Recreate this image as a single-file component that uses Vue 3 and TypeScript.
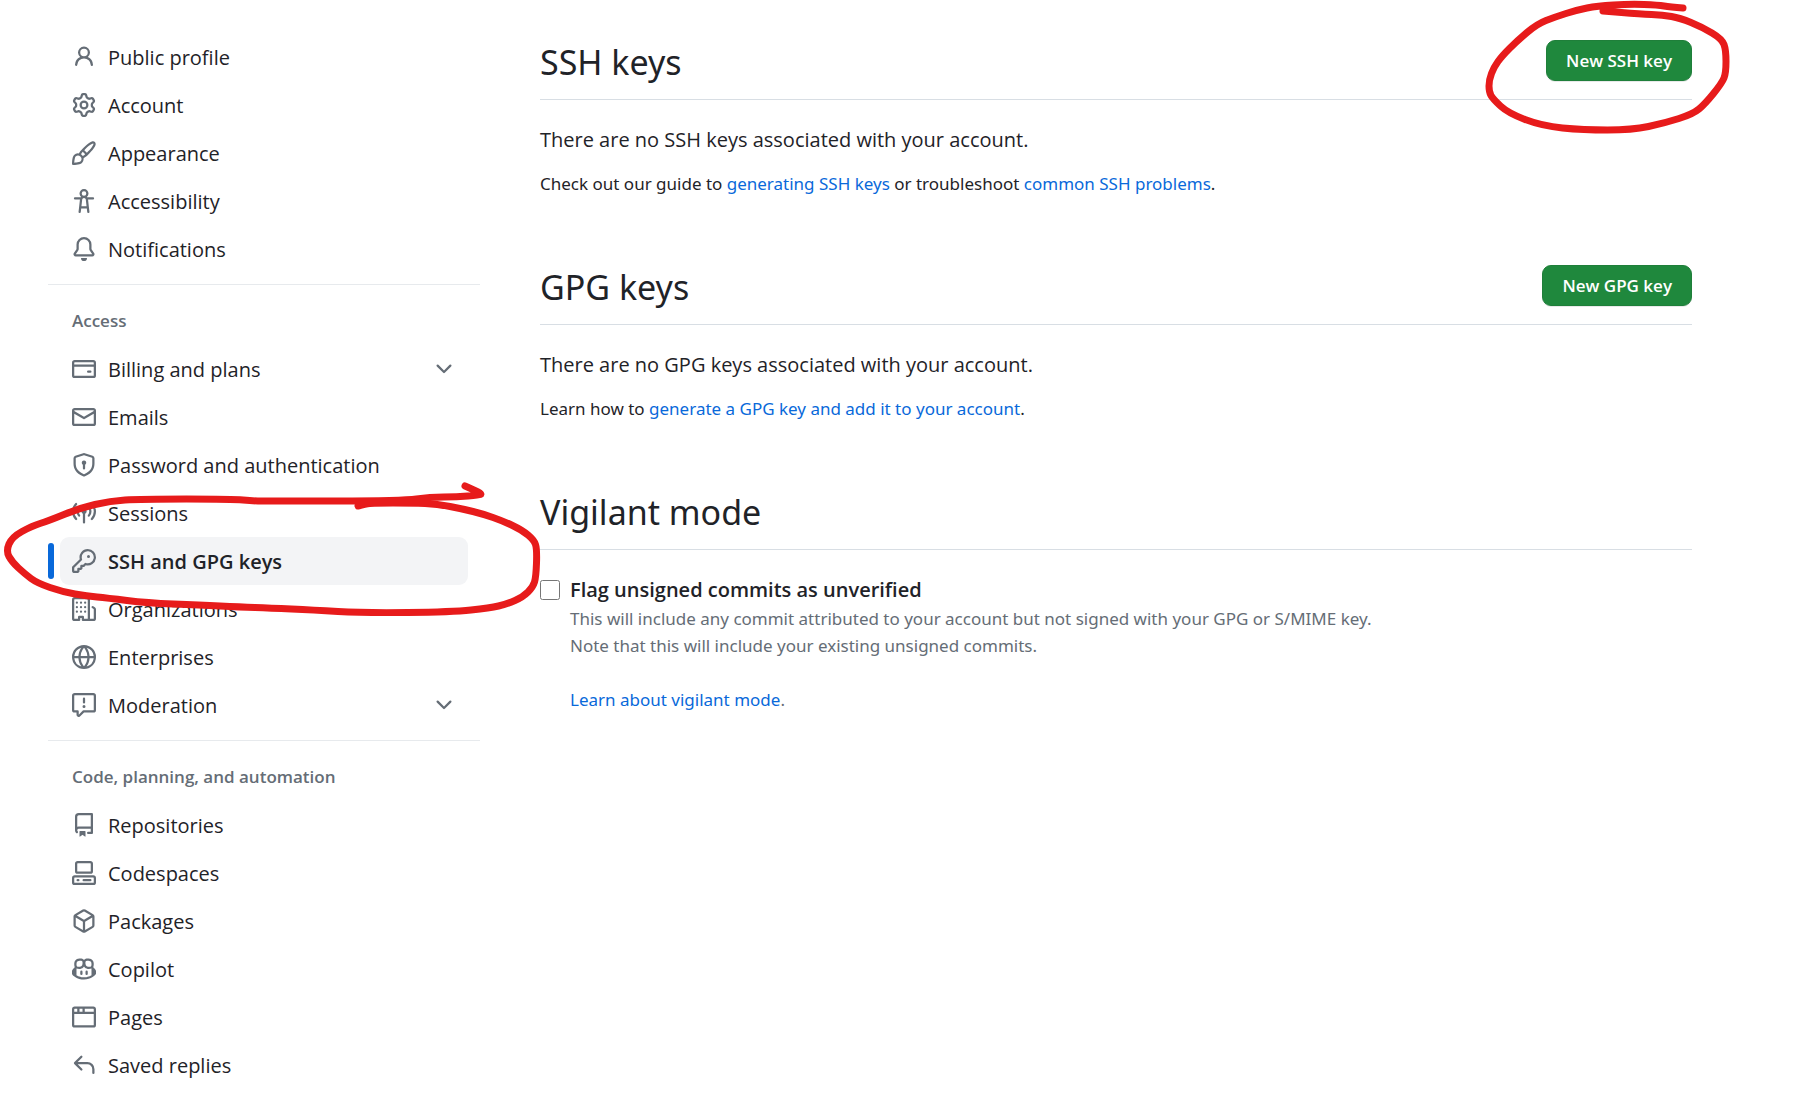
<script setup lang="ts">
import { ref } from 'vue'

interface NavItem {
  label: string
  icon: string
  expandable?: boolean
  current?: boolean
}

interface NavGroup {
  title?: string
  items: NavItem[]
}

type Point = [number, number]

const icons: Record<string, string> = {
  person: 'M10.561 8.073a6.005 6.005 0 0 1 3.432 5.142.75.75 0 1 1-1.498.07 4.5 4.5 0 0 0-8.99 0 .75.75 0 0 1-1.498-.07 6.004 6.004 0 0 1 3.431-5.142 3.999 3.999 0 1 1 5.123 0ZM10.5 5a2.5 2.5 0 1 0-5 0 2.5 2.5 0 0 0 5 0Z',
  gear: 'M8 0a8.2 8.2 0 0 1 .701.031C9.444.095 9.99.645 10.16 1.29l.288 1.107c.018.066.079.158.212.224.231.114.454.243.668.386.123.082.233.09.299.071l1.103-.303c.644-.176 1.392.021 1.82.63.27.385.506.792.704 1.218.315.675.111 1.422-.364 1.891l-.814.806c-.049.048-.098.147-.088.294.016.257.016.515 0 .772-.01.147.038.246.088.294l.814.806c.475.469.679 1.216.364 1.891a7.977 7.977 0 0 1-.704 1.217c-.428.61-1.176.807-1.82.63l-1.102-.302c-.067-.019-.177-.011-.3.071a5.909 5.909 0 0 1-.668.386c-.133.066-.194.158-.211.224l-.29 1.106c-.168.646-.715 1.196-1.458 1.26a8.006 8.006 0 0 1-1.402 0c-.743-.064-1.289-.614-1.458-1.26l-.289-1.106c-.018-.066-.079-.158-.212-.224a5.738 5.738 0 0 1-.668-.386c-.123-.082-.233-.09-.299-.071l-1.103.303c-.644.176-1.392-.021-1.82-.63a8.12 8.12 0 0 1-.704-1.218c-.315-.675-.111-1.422.363-1.891l.815-.806c.05-.048.098-.147.088-.294a6.214 6.214 0 0 1 0-.772c.01-.147-.038-.246-.088-.294l-.815-.806C.635 6.045.431 5.298.746 4.623a7.92 7.92 0 0 1 .704-1.217c.428-.61 1.176-.807 1.82-.63l1.102.302c.067.019.177.011.3-.071.214-.143.437-.272.668-.386.133-.066.194-.158.211-.224l.29-1.106C6.009.645 6.556.095 7.299.03 7.53.01 7.764 0 8 0Zm-.571 1.525c-.036.003-.108.036-.137.146l-.289 1.105c-.147.561-.549.967-.998 1.189-.173.086-.34.183-.5.29-.417.278-.97.423-1.529.27l-1.103-.303c-.109-.03-.175.016-.195.045-.22.312-.412.644-.573.99-.014.031-.021.11.059.19l.815.806c.411.406.562.957.53 1.456a4.709 4.709 0 0 0 0 .582c.032.499-.119 1.05-.53 1.456l-.815.806c-.081.08-.073.159-.059.19.162.346.353.677.573.989.02.03.085.076.195.046l1.102-.303c.56-.153 1.113-.008 1.53.27.161.107.328.204.501.29.447.222.85.629.997 1.189l.289 1.105c.029.109.101.143.137.146a6.6 6.6 0 0 0 1.142 0c.036-.003.108-.036.137-.146l.289-1.105c.147-.561.549-.967.998-1.189.173-.086.34-.183.5-.29.417-.278.97-.423 1.529-.27l1.103.303c.109.029.175-.016.195-.045.22-.313.411-.644.573-.99.014-.031.021-.11-.059-.19l-.815-.806c-.411-.406-.562-.957-.53-1.456a4.709 4.709 0 0 0 0-.582c-.032-.499.119-1.05.53-1.456l.815-.806c.081-.08.073-.159.059-.19a6.464 6.464 0 0 0-.573-.989c-.02-.03-.085-.076-.195-.046l-1.102.303c-.56.153-1.113.008-1.53-.27a4.44 4.44 0 0 0-.501-.29c-.447-.222-.85-.629-.997-1.189l-.289-1.105c-.029-.11-.101-.143-.137-.146a6.6 6.6 0 0 0-1.142 0ZM11 8a3 3 0 1 1-6 0 3 3 0 0 1 6 0ZM9.5 8a1.5 1.5 0 1 0-3.001.001A1.5 1.5 0 0 0 9.5 8Z',
  paintbrush: 'M11.134 1.535c.7-.509 1.416-.942 2.076-1.155.649-.21 1.463-.267 2.069.34.603.601.568 1.411.368 2.07-.202.668-.624 1.39-1.125 2.096-1.011 1.424-2.496 2.987-3.775 4.249-1.098 1.084-2.132 1.839-3.04 2.3a3.744 3.744 0 0 1-1.055 3.217c-.431.431-1.065.691-1.657.861-.614.177-1.294.287-1.914.357A21.151 21.151 0 0 1 .797 16H.743l.007-.75H.749L.742 16a.75.75 0 0 1-.743-.742l.743-.008-.742.007v-.054a21.25 21.25 0 0 1 .13-2.284c.067-.647.187-1.287.358-1.914.17-.591.43-1.226.86-1.657a3.746 3.746 0 0 1 3.227-1.054c.466-.893 1.225-1.907 2.314-2.982 1.271-1.255 2.833-2.75 4.245-3.777ZM1.62 13.089c-.051.464-.086.929-.104 1.395.466-.018.932-.053 1.396-.104a10.511 10.511 0 0 0 1.668-.309c.526-.151.856-.325 1.011-.48a2.25 2.25 0 1 0-3.182-3.182c-.155.155-.329.485-.48 1.01a10.515 10.515 0 0 0-.309 1.67Zm10.396-10.34c-1.224.89-2.605 2.189-3.822 3.384l1.718 1.718c1.21-1.205 2.51-2.597 3.387-3.833.47-.662.78-1.227.912-1.662.134-.444.032-.551.009-.575h-.001V1.78c-.014-.014-.113-.113-.548.027-.432.14-.995.462-1.655.942Zm-4.832 7.266-.001.001a9.859 9.859 0 0 0 1.63-1.142L7.155 7.216a9.7 9.7 0 0 0-1.161 1.607c.482.302.889.71 1.19 1.192Z',
  accessibility: 'M9.923 5.302c.063.063.122.129.178.198H14A.75.75 0 0 1 14 7h-3.3l.578 5.163.362 2.997a.75.75 0 0 1-1.49.18L9.868 13H6.132l-.282 2.34a.75.75 0 0 1-1.49-.18l.362-2.997L5.3 7H2a.75.75 0 0 1 0-1.5h3.9a2.54 2.54 0 0 1 .176-.198 3 3 0 1 1 3.847 0ZM9.2 7.073h-.001a1.206 1.206 0 0 0-2.398 0L6.305 11.5h3.39ZM9.5 3a1.5 1.5 0 1 0-3.001.001A1.5 1.5 0 0 0 9.5 3Z',
  bell: 'M8 16a2 2 0 0 0 1.985-1.75c.017-.137-.097-.25-.235-.25h-3.5c-.138 0-.252.113-.235.25A2 2 0 0 0 8 16ZM3 5a5 5 0 0 1 10 0v2.947c0 .05.015.098.042.139l1.703 2.555A1.519 1.519 0 0 1 13.482 13H2.518a1.516 1.516 0 0 1-1.263-2.36l1.703-2.554A.255.255 0 0 0 3 7.947Zm5-3.5A3.5 3.5 0 0 0 4.5 5v2.947c0 .346-.102.683-.294.97l-1.703 2.556a.017.017 0 0 0-.003.01l.001.006c0 .002.002.004.004.006l.006.004.007.001h10.964l.007-.001.006-.004.004-.006.001-.007a.017.017 0 0 0-.003-.01l-1.703-2.554a1.745 1.745 0 0 1-.294-.97V5A3.5 3.5 0 0 0 8 1.5Z',
  card: 'M10.75 9a.75.75 0 0 0 0 1.5h1.5a.75.75 0 0 0 0-1.5h-1.5ZM0 3.75C0 2.784.784 2 1.75 2h12.5c.966 0 1.75.784 1.75 1.75v8.5A1.75 1.75 0 0 1 14.25 14H1.75A1.75 1.75 0 0 1 0 12.25ZM14.5 6.5h-13v5.75c0 .138.112.25.25.25h12.5a.25.25 0 0 0 .25-.25Zm0-2.75a.25.25 0 0 0-.25-.25H1.75a.25.25 0 0 0-.25.25V5h13Z',
  mail: 'M1.75 2h12.5c.966 0 1.75.784 1.75 1.75v8.5A1.75 1.75 0 0 1 14.25 14H1.75A1.75 1.75 0 0 1 0 12.25v-8.5C0 2.784.784 2 1.75 2ZM1.5 12.251c0 .138.112.25.25.25h12.5a.25.25 0 0 0 .25-.25V5.809L8.38 9.397a.75.75 0 0 1-.76 0L1.5 5.809v6.442Zm13-8.181v-.32a.25.25 0 0 0-.25-.25H1.75a.25.25 0 0 0-.25.25v.32L8 7.88Z',
  shield: 'm8.533.133 5.25 1.68A1.75 1.75 0 0 1 15 3.48V7c0 1.566-.32 3.182-1.303 4.682-.983 1.498-2.585 2.813-5.032 3.855a1.697 1.697 0 0 1-1.33 0c-2.447-1.042-4.049-2.357-5.032-3.855C1.32 10.182 1 8.566 1 7V3.48a1.755 1.755 0 0 1 1.217-1.667l5.25-1.68a1.748 1.748 0 0 1 1.066 0Zm-.61 1.429.001.001-5.25 1.68a.251.251 0 0 0-.174.237V7c0 1.36.275 2.666 1.057 3.859.784 1.194 2.121 2.342 4.366 3.298a.196.196 0 0 0 .154 0c2.245-.957 3.582-2.103 4.366-3.297C13.225 9.666 13.5 8.358 13.5 7V3.48a.25.25 0 0 0-.174-.238l-5.25-1.68a.25.25 0 0 0-.153 0ZM9.5 6.5c0 .536-.286 1.032-.75 1.3v2.45a.75.75 0 0 1-1.5 0V7.8A1.5 1.5 0 1 1 9.5 6.5Z',
  broadcast: 'M8.75 8.582v5.668a.75.75 0 0 1-1.5 0V8.582a1.75 1.75 0 1 1 1.5 0Zm3.983-7.125a.75.75 0 0 1 1.06.026A7.976 7.976 0 0 1 16 7c0 2.139-.84 4.083-2.207 5.517a.75.75 0 1 1-1.086-1.034A6.474 6.474 0 0 0 14.5 7a6.474 6.474 0 0 0-1.793-4.483.75.75 0 0 1 .026-1.06Zm-9.466 0c.3.286.312.76.026 1.06A6.474 6.474 0 0 0 1.5 7a6.47 6.47 0 0 0 1.793 4.483.75.75 0 0 1-1.086 1.034A7.973 7.973 0 0 1 0 7c0-2.139.84-4.083 2.207-5.517a.75.75 0 0 1 1.06-.026Zm8.556 2.321A4.988 4.988 0 0 1 13 7a4.988 4.988 0 0 1-1.177 3.222.75.75 0 1 1-1.146-.967A3.487 3.487 0 0 0 11.5 7c0-.86-.309-1.645-.823-2.255a.75.75 0 0 1 1.146-.967Zm-6.492.958A3.48 3.48 0 0 0 4.5 7a3.48 3.48 0 0 0 .823 2.255.75.75 0 0 1-1.146.967A4.981 4.981 0 0 1 3 7a4.982 4.982 0 0 1 1.188-3.236.75.75 0 1 1 1.143.972Z',
  key: 'M10.5 0a5.499 5.499 0 1 1-1.288 10.848l-.932.932a.749.749 0 0 1-.53.22H7v.75a.749.749 0 0 1-.22.53l-.5.5a.749.749 0 0 1-.53.22H5v.75a.749.749 0 0 1-.22.53l-.5.5a.749.749 0 0 1-.53.22h-2A1.75 1.75 0 0 1 0 14.25v-2c0-.199.079-.389.22-.53l4.932-4.932A5.5 5.5 0 0 1 10.5 0Zm-4 5.5c-.001.431.069.86.205 1.269a.75.75 0 0 1-.181.768L1.5 12.56v1.69c0 .138.112.25.25.25h1.69l.06-.06v-1.19a.75.75 0 0 1 .75-.75h1.19l.06-.06v-1.19a.75.75 0 0 1 .75-.75h1.19l1.023-1.025a.75.75 0 0 1 .768-.18A4 4 0 1 0 6.5 5.5ZM11 6a1 1 0 1 1 0-2 1 1 0 0 1 0 2Z',
  organization: 'M1.75 16A1.75 1.75 0 0 1 0 14.25V1.75C0 .784.784 0 1.75 0h8.5C11.216 0 12 .784 12 1.75v12.5c0 .085-.006.168-.018.25h2.268a.25.25 0 0 0 .25-.25V8.285a.25.25 0 0 0-.111-.208l-1.055-.703a.749.749 0 1 1 .832-1.248l1.055.703c.487.325.779.871.779 1.456v5.965A1.75 1.75 0 0 1 14.25 16h-3.5a.766.766 0 0 1-.197-.026c-.099.017-.2.026-.303.026h-3a.75.75 0 0 1-.75-.75V14h-1v1.25a.75.75 0 0 1-.75.75Zm-.25-1.75c0 .138.112.25.25.25H4v-1.25a.75.75 0 0 1 .75-.75h2.5a.75.75 0 0 1 .75.75v1.25h2.25a.25.25 0 0 0 .25-.25V1.75a.25.25 0 0 0-.25-.25h-8.5a.25.25 0 0 0-.25.25ZM2.5 3.75a.75.75 0 1 1 1.5 0 .75.75 0 0 1-1.5 0Zm2.75 0a.75.75 0 1 1 1.5 0 .75.75 0 0 1-1.5 0Zm2.75 0a.75.75 0 1 1 1.5 0 .75.75 0 0 1-1.5 0ZM2.5 6.75a.75.75 0 1 1 1.5 0 .75.75 0 0 1-1.5 0Zm2.75 0a.75.75 0 1 1 1.5 0 .75.75 0 0 1-1.5 0Zm2.75 0a.75.75 0 1 1 1.5 0 .75.75 0 0 1-1.5 0ZM2.5 9.75a.75.75 0 1 1 1.5 0 .75.75 0 0 1-1.5 0Zm2.75 0a.75.75 0 1 1 1.5 0 .75.75 0 0 1-1.5 0Zm2.75 0a.75.75 0 1 1 1.5 0 .75.75 0 0 1-1.5 0Z',
  globe: 'M8 0a8 8 0 1 1 0 16A8 8 0 0 1 8 0ZM5.78 8.75a9.64 9.64 0 0 0 1.363 4.177c.255.426.542.832.857 1.215.245-.296.551-.705.857-1.215A9.64 9.64 0 0 0 10.22 8.75Zm4.44-1.5a9.64 9.64 0 0 0-1.363-4.177c-.307-.51-.612-.919-.857-1.215a9.927 9.927 0 0 0-.857 1.215A9.64 9.64 0 0 0 5.78 7.25Zm-5.944 1.5H1.543a6.507 6.507 0 0 0 4.666 5.5c-.123-.181-.24-.365-.352-.552-.715-1.192-1.437-2.874-1.581-4.948Zm-2.733-1.5h2.733c.144-2.074.866-3.756 1.58-4.948.12-.197.237-.381.353-.552a6.507 6.507 0 0 0-4.666 5.5Zm10.181 1.5c-.144 2.074-.866 3.756-1.58 4.948-.12.197-.237.381-.353.552a6.507 6.507 0 0 0 4.666-5.5Zm2.733-1.5a6.507 6.507 0 0 0-4.666-5.5c.123.181.24.365.353.552.714 1.192 1.436 2.874 1.58 4.948Z',
  report: 'M0 1.75C0 .784.784 0 1.75 0h12.5C15.216 0 16 .784 16 1.75v9.5A1.75 1.75 0 0 1 14.25 13H8.06l-2.573 2.573A1.458 1.458 0 0 1 3 14.543V13H1.75A1.75 1.75 0 0 1 0 11.25Zm1.75-.25a.25.25 0 0 0-.25.25v9.5c0 .138.112.25.25.25h2a.75.75 0 0 1 .75.75v2.19l2.72-2.72a.749.749 0 0 1 .53-.22h6.5a.25.25 0 0 0 .25-.25v-9.5a.25.25 0 0 0-.25-.25Zm7 2.25v2.5a.75.75 0 0 1-1.5 0v-2.5a.75.75 0 0 1 1.5 0ZM9 9a1 1 0 1 1-2 0 1 1 0 0 1 2 0Z',
  repo: 'M2 2.5A2.5 2.5 0 0 1 4.5 0h8.75a.75.75 0 0 1 .75.75v12.5a.75.75 0 0 1-.75.75h-2.5a.75.75 0 0 1 0-1.5h1.75v-2h-8a1 1 0 0 0-.714 1.7.75.75 0 1 1-1.072 1.05A2.495 2.495 0 0 1 2 11.5Zm10.5-1h-8a1 1 0 0 0-1 1v6.708A2.486 2.486 0 0 1 4.5 9h8ZM5 12.25a.25.25 0 0 1 .25-.25h3.5a.25.25 0 0 1 .25.25v3.25a.25.25 0 0 1-.4.2l-1.45-1.087a.249.249 0 0 0-.3 0L5.4 15.7a.25.25 0 0 1-.4-.2Z',
  codespaces: 'M0 11.25c0-.966.784-1.75 1.75-1.75h12.5c.966 0 1.75.784 1.75 1.75v3A1.75 1.75 0 0 1 14.25 16H1.75A1.75 1.75 0 0 1 0 14.25Zm2-9.5C2 .784 2.784 0 3.75 0h8.5C13.216 0 14 .784 14 1.75v5a1.75 1.75 0 0 1-1.75 1.75h-8.5A1.75 1.75 0 0 1 2 6.75Zm1.75-.25a.25.25 0 0 0-.25.25v5c0 .138.112.25.25.25h8.5a.25.25 0 0 0 .25-.25v-5a.25.25 0 0 0-.25-.25Zm-2 9.5a.25.25 0 0 0-.25.25v3c0 .138.112.25.25.25h12.5a.25.25 0 0 0 .25-.25v-3a.25.25 0 0 0-.25-.25ZM7 12.75a.75.75 0 0 1 .75-.75h4.5a.75.75 0 0 1 0 1.5h-4.5a.75.75 0 0 1-.75-.75Zm-4 0a.75.75 0 0 1 .75-.75h.5a.75.75 0 0 1 0 1.5h-.5a.75.75 0 0 1-.75-.75Z',
  package: 'm8.878.392 5.25 3.045c.54.314.872.89.872 1.514v6.098a1.75 1.75 0 0 1-.872 1.514l-5.25 3.045a1.75 1.75 0 0 1-1.756 0l-5.25-3.045A1.75 1.75 0 0 1 1 11.049V4.951c0-.624.332-1.201.872-1.514L7.122.392a1.75 1.75 0 0 1 1.756 0ZM7.875 1.69l-4.63 2.685L8 7.133l4.755-2.758-4.63-2.685a.248.248 0 0 0-.25 0ZM2.5 5.677v5.372c0 .09.047.171.125.216l4.625 2.683V8.432Zm6.25 8.271 4.625-2.683a.25.25 0 0 0 .125-.216V5.677L8.75 8.432Z',
  copilot: 'M7.998 15.035c-4.562 0-7.873-2.914-7.998-3.749V9.338c.085-.628.677-1.686 1.588-2.065.013-.07.024-.143.036-.218.029-.183.06-.384.126-.612-.201-.508-.254-1.084-.254-1.656 0-.87.128-1.769.693-2.484.579-.733 1.494-1.124 2.724-1.261 1.206-.134 2.262.034 2.944.765.05.053.096.108.139.165.044-.057.094-.112.143-.165.682-.731 1.738-.899 2.944-.765 1.23.137 2.145.528 2.724 1.261.566.715.693 1.614.693 2.484 0 .572-.053 1.148-.254 1.656.066.228.098.429.126.612.012.076.024.148.037.218.924.385 1.522 1.471 1.591 2.095v1.872c0 .766-3.351 3.795-8.002 3.795Zm0-1.485c2.28 0 4.584-1.11 5.002-1.433V7.862l-.023-.116c-.49.21-1.075.291-1.727.291-1.146 0-2.059-.327-2.71-.991A3.222 3.222 0 0 1 8 6.303a3.24 3.24 0 0 1-.544.743c-.65.664-1.563.991-2.71.991-.652 0-1.236-.081-1.727-.291l-.023.116v4.255c.419.323 2.722 1.433 5.002 1.433ZM6.762 2.83c-.193-.206-.637-.413-1.682-.297-1.019.113-1.479.404-1.713.7-.247.312-.369.789-.369 1.554 0 .793.129 1.171.308 1.371.162.181.519.379 1.442.379.853 0 1.339-.235 1.638-.54.315-.322.527-.827.617-1.553.117-.935-.037-1.395-.241-1.614Zm4.155-.297c-1.044-.116-1.488.091-1.681.297-.204.219-.359.679-.242 1.614.091.726.303 1.231.618 1.553.299.305.784.54 1.638.54.922 0 1.28-.198 1.442-.379.179-.2.308-.578.308-1.371 0-.765-.123-1.242-.37-1.554-.233-.296-.693-.587-1.713-.7ZM6.25 9.037a.75.75 0 0 1 .75.75v1.501a.75.75 0 0 1-1.5 0V9.787a.75.75 0 0 1 .75-.75Zm4.25.75v1.501a.75.75 0 0 1-1.5 0V9.787a.75.75 0 0 1 1.5 0Z',
  browser: 'M0 2.75C0 1.784.784 1 1.75 1h12.5c.966 0 1.75.784 1.75 1.75v10.5A1.75 1.75 0 0 1 14.25 15H1.75A1.75 1.75 0 0 1 0 13.25ZM14.5 6h-13v7.25c0 .138.112.25.25.25h12.5a.25.25 0 0 0 .25-.25Zm-6-3.5v2h6V2.75a.25.25 0 0 0-.25-.25ZM5 2.5v2h2v-2Zm-3.25 0a.25.25 0 0 0-.25.25V4.5h2v-2Z',
  reply: 'M6.78 1.97a.75.75 0 0 1 0 1.06L3.81 6h6.44A4.75 4.75 0 0 1 15 10.75v2.5a.75.75 0 0 1-1.5 0v-2.5a3.25 3.25 0 0 0-3.25-3.25H3.81l2.97 2.97a.749.749 0 0 1-.326 1.275.749.749 0 0 1-.734-.215L1.47 7.28a.75.75 0 0 1 0-1.06l4.25-4.25a.75.75 0 0 1 1.06 0Z',
  chevron: 'M12.78 5.22a.749.749 0 0 1 0 1.06l-4.25 4.25a.749.749 0 0 1-1.06 0L3.22 6.28a.749.749 0 1 1 1.06-1.06L8 8.939l3.72-3.719a.749.749 0 0 1 1.06 0Z',
}

const groups: NavGroup[] = [
  {
    items: [
      { label: 'Public profile', icon: 'person' },
      { label: 'Account', icon: 'gear' },
      { label: 'Appearance', icon: 'paintbrush' },
      { label: 'Accessibility', icon: 'accessibility' },
      { label: 'Notifications', icon: 'bell' },
    ],
  },
  {
    title: 'Access',
    items: [
      { label: 'Billing and plans', icon: 'card', expandable: true },
      { label: 'Emails', icon: 'mail' },
      { label: 'Password and authentication', icon: 'shield' },
      { label: 'Sessions', icon: 'broadcast' },
      { label: 'SSH and GPG keys', icon: 'key', current: true },
      { label: 'Organizations', icon: 'organization' },
      { label: 'Enterprises', icon: 'globe' },
      { label: 'Moderation', icon: 'report', expandable: true },
    ],
  },
  {
    title: 'Code, planning, and automation',
    items: [
      { label: 'Repositories', icon: 'repo' },
      { label: 'Codespaces', icon: 'codespaces' },
      { label: 'Packages', icon: 'package' },
      { label: 'Copilot', icon: 'copilot' },
      { label: 'Pages', icon: 'browser' },
      { label: 'Saved replies', icon: 'reply' },
    ],
  },
]

const flagUnsigned = ref(false)

// Turns the sampled points of a pen stroke into a smooth path.
function penStroke(points: Point[]): string {
  let d = `M${points[0][0]} ${points[0][1]}`
  for (let i = 1; i < points.length - 1; i++) {
    const [x, y] = points[i]
    const [nx, ny] = points[i + 1]
    d += `Q${x} ${y} ${(x + nx) / 2} ${(y + ny) / 2}`
  }
  const [lx, ly] = points[points.length - 1]
  return `${d}L${lx} ${ly}`
}

const navMark = penStroke([
  [358, 26], [366, 24], [373, 23], [413, 23], [437, 24], [463, 29], [483, 34], [503, 41], [522, 50],
  [534, 60], [537, 69], [536, 97], [533, 107], [523, 117], [507, 124], [490, 128], [452, 132],
  [363, 133], [313, 130], [270, 128], [240, 127], [200, 125], [147, 123], [107, 118], [87, 116],
  [63, 112], [37, 103], [25, 94], [12, 82], [6, 71], [12, 57], [32, 46], [48, 41], [80, 28],
  [110, 21], [140, 19], [233, 19], [253, 21], [270, 21], [403, 21], [430, 17], [457, 17], [479, 15], [482, 14],
  [474, 10], [465, 6],
])

const buttonMark = penStroke([
  [223, 8], [210, 7], [198, 5], [170, 4], [137, 6], [117, 10], [95, 17], [77, 24], [57, 41], [42, 56],
  [34, 67], [29, 80], [29, 92], [33, 99], [48, 113], [82, 126], [123, 130], [172, 130], [205, 123],
  [233, 114], [245, 104], [262, 83], [266, 73], [266, 50], [262, 39], [242, 27], [220, 18],
  [203, 15], [180, 14], [143, 11],
])
</script>

<template>
  <div class="page">
    <nav class="sidebar" aria-label="Settings">
      <section v-for="(group, g) in groups" :key="g" class="group">
        <h3 v-if="group.title" class="group-title">{{ group.title }}</h3>
        <ul class="list">
          <li v-for="item in group.items" :key="item.label" class="entry" :class="{ current: item.current }">
            <button v-if="item.expandable" type="button" class="row" aria-expanded="false">
              <svg class="icon" viewBox="0 0 16 16" aria-hidden="true"><path :d="icons[item.icon]" /></svg>
              <span class="label">{{ item.label }}</span>
              <svg class="icon" viewBox="0 0 16 16" aria-hidden="true"><path :d="icons.chevron" /></svg>
            </button>
            <a v-else href="#" class="row" :aria-current="item.current ? 'page' : undefined">
              <svg class="icon" viewBox="0 0 16 16" aria-hidden="true"><path :d="icons[item.icon]" /></svg>
              <span class="label">{{ item.label }}</span>
            </a>
            <svg v-if="item.current" class="mark nav-mark" viewBox="0 0 560 150" aria-hidden="true">
              <path :d="navMark" />
            </svg>
          </li>
        </ul>
      </section>
    </nav>

    <main class="content">
      <section class="block">
        <header class="subhead">
          <h2 class="title">SSH keys</h2>
          <div class="action">
            <button type="button" class="primary">New SSH key</button>
            <svg class="mark button-mark" viewBox="0 0 292 150" aria-hidden="true">
              <path :d="buttonMark" />
            </svg>
          </div>
        </header>
        <p class="lead">There are no SSH keys associated with your account.</p>
        <p class="note">
          Check out our guide to <a href="#">generating SSH keys</a> or troubleshoot
          <a href="#">common SSH problems</a>.
        </p>
      </section>

      <section class="block">
        <header class="subhead">
          <h2 class="title">GPG keys</h2>
          <div class="action">
            <button type="button" class="primary">New GPG key</button>
          </div>
        </header>
        <p class="lead">There are no GPG keys associated with your account.</p>
        <p class="note">
          Learn how to <a href="#">generate a GPG key and add it to your account</a>.
        </p>
      </section>

      <section class="block">
        <header class="subhead">
          <h2 class="title">Vigilant mode</h2>
        </header>
        <div class="option">
          <input id="flag-unsigned" v-model="flagUnsigned" type="checkbox" class="check" aria-describedby="flag-help" />
          <div>
            <label for="flag-unsigned" class="option-label">Flag unsigned commits as unverified</label>
            <p id="flag-help" class="help">
              This will include any commit attributed to your account but not signed with your GPG or S/MIME key.<br />
              Note that this will include your existing unsigned commits.
            </p>
            <p class="help more"><a href="#">Learn about vigilant mode</a>.</p>
          </div>
        </div>
      </section>
    </main>
  </div>
</template>

<style>
body {
  background: #ffffff;
}
</style>

<style scoped>
.page {
  display: flex;
  gap: 60px;
  padding: 33px 120px 0 48px;
  color: #1f2328;
  font-family: "Open Sans", "Noto Sans", sans-serif;
  font-size: 20px;
  line-height: 30px;
}

a {
  color: #0969da;
  text-decoration: none;
}

h2,
h3,
p,
ul {
  margin: 0;
  padding: 0;
}

.sidebar {
  flex: 0 0 432px;
}

.group + .group {
  margin-top: 11px;
  border-top: 1px solid #e7eaed;
}

.group-title {
  padding: 22px 24px 11px;
  color: #656d76;
  font-size: 17px;
  font-weight: 600;
  line-height: 27px;
}

.list {
  padding: 0 12px;
  list-style: none;
}

.entry {
  position: relative;
}

.row {
  display: flex;
  align-items: center;
  gap: 12px;
  box-sizing: border-box;
  width: 100%;
  height: 48px;
  padding: 0 12px;
  border: 0;
  border-radius: 9px;
  background: transparent;
  color: #1f2328;
  font: inherit;
  text-align: left;
}

.label {
  flex: 1;
  padding-top: 2px;
}

.icon {
  flex: none;
  width: 24px;
  height: 24px;
  fill: #656d76;
}

.current .row {
  background: #f3f4f6;
  font-weight: 600;
}

.current::before {
  content: "";
  position: absolute;
  top: 6px;
  left: -12px;
  width: 6px;
  height: 36px;
  border-radius: 3px;
  background: #0969da;
}

.mark {
  position: absolute;
  z-index: 1;
  fill: none;
  stroke: #e71b1b;
  stroke-width: 7;
  stroke-linecap: round;
  stroke-linejoin: round;
  pointer-events: none;
}

.nav-mark {
  top: -57px;
  left: -60px;
  width: 560px;
  height: 150px;
}

.button-mark {
  top: -40px;
  right: -60px;
  width: 292px;
  height: 150px;
}

.content {
  flex: 1;
  min-width: 0;
}

.block + .block {
  margin-top: 61px;
}

.subhead {
  display: flex;
  align-items: center;
  justify-content: space-between;
  margin-bottom: 25px;
  padding-bottom: 11px;
  border-bottom: 1px solid #d8dee4;
}

.title {
  padding-top: 3px;
  font-family: "Noto Sans", sans-serif;
  font-size: 34px;
  font-weight: 400;
  line-height: 52px;
}

.action {
  position: relative;
}

.primary {
  display: block;
  height: 41px;
  padding: 0 19px;
  border: 1px solid #1f7f3a;
  border-radius: 9px;
  background: #1f883d;
  box-shadow: 0 1px 0 rgba(31, 35, 40, 0.1);
  color: #ffffff;
  font: inherit;
  font-size: 17px;
  font-weight: 600;
}

.lead {
  margin-bottom: 15px;
}

.note,
.help {
  font-family: "Noto Sans", sans-serif;
  font-size: 17px;
  line-height: 27px;
}

.option {
  display: flex;
  align-items: flex-start;
  gap: 10px;
}

.check {
  flex: none;
  width: 20px;
  height: 20px;
  margin: 5px 0 0;
}

.option-label {
  display: block;
  font-weight: 600;
}

.help {
  color: #656d76;
}

.more {
  margin-top: 27px;
}
</style>
